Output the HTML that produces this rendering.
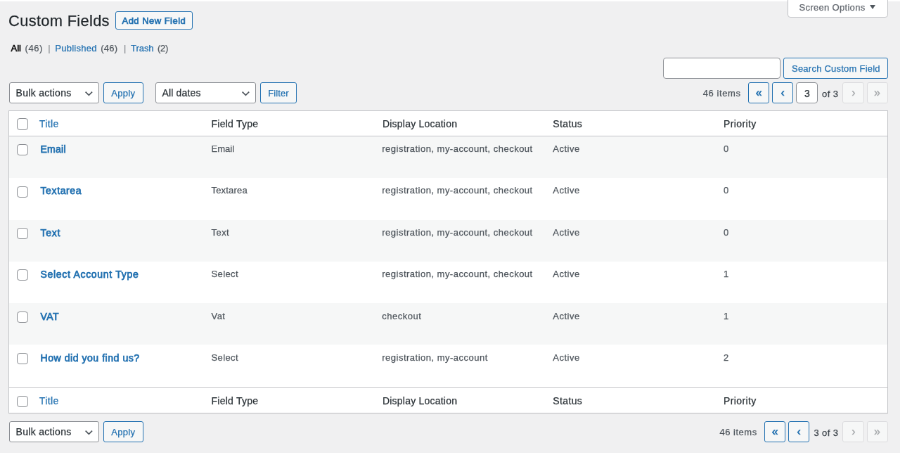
<!DOCTYPE html>
<html lang="en">
<head>
<meta charset="utf-8">
<title>Custom Fields</title>
<style>
*{box-sizing:border-box;margin:0;padding:0}
html,body{width:900px;height:453px;overflow:hidden;background:#f0f0f1}
#wrap{position:absolute;left:0;top:0;width:1280px;height:645px;transform:scale(0.703125);transform-origin:0 0;font-family:"Liberation Sans", Arial, sans-serif;font-size:13px;color:#3c434a;overflow:hidden;will-change:transform}
#wrap>*{position:absolute}
.t{white-space:nowrap;font-weight:400;text-decoration:none;display:block;-webkit-text-stroke:0.25px currentColor}
</style>
</head>
<body>
<div id="wrap">
<div style="left:0px;top:0px;width:1280px;height:2px;background:#fff;"></div>
<div style="left:1120px;top:-5.5px;width:143px;height:30px;border:1px solid #c3c4c7;border-radius:0 0 4px 4px;background:#fff;box-shadow:0 0 0 transparent;"></div>
<div style="left:1236.8px;top:7.4px;width:0;height:0;border-left:4.7px solid transparent;border-right:4.7px solid transparent;border-top:6.4px solid #50575e"></div>
<div style="left:163.5px;top:16px;width:110.5px;height:26px;border:1px solid #2271b1;border-radius:3px;background:#f6f7f7;"></div>
<div style="left:942.8px;top:82px;width:167.2px;height:30px;border:1px solid #8c8f94;border-radius:4px;background:#fff;box-shadow:inset 0 0 0 transparent;"></div>
<div style="left:1114px;top:82px;width:149px;height:30px;border:1px solid #2271b1;border-radius:3px;background:#f6f7f7;"></div>
<div style="left:13px;top:117px;width:127.5px;height:30px;border:1px solid #8c8f94;border-radius:3px;background:#fff;"></div>
<svg style="left:118.80px;top:128.10px" width="14.70" height="9.90" viewBox="-2 -2 14.70 9.90"><path d="M0.6 0.6 L5.35 5.30 L10.10 0.6" fill="none" stroke="#50575e" stroke-width="1.7" stroke-linecap="butt" stroke-linejoin="miter"/></svg>
<div style="left:147px;top:117px;width:57px;height:30px;border:1px solid #2271b1;border-radius:3px;background:#f6f7f7;"></div>
<div style="left:221px;top:117px;width:142.5px;height:30px;border:1px solid #8c8f94;border-radius:3px;background:#fff;"></div>
<svg style="left:342.40px;top:128.10px" width="14.80" height="9.90" viewBox="-2 -2 14.80 9.90"><path d="M0.6 0.6 L5.40 5.30 L10.20 0.6" fill="none" stroke="#50575e" stroke-width="1.7" stroke-linecap="butt" stroke-linejoin="miter"/></svg>
<div style="left:370px;top:117px;width:52px;height:30px;border:1px solid #2271b1;border-radius:3px;background:#f6f7f7;"></div>
<div style="left:1232.6px;top:117px;width:30.4px;height:30px;border:1px solid #dcdcde;border-radius:3px;background:#f6f7f7;"></div>
<div style="left:1198px;top:117px;width:30.5px;height:30px;border:1px solid #dcdcde;border-radius:3px;background:#f6f7f7;"></div>
<div style="left:1064px;top:117px;width:30px;height:30px;border:1px solid #2271b1;border-radius:3px;background:#f6f7f7;"></div>
<div style="left:1098.2px;top:117px;width:30.3px;height:30px;border:1px solid #2271b1;border-radius:3px;background:#f6f7f7;"></div>
<div style="left:1131.6px;top:117px;width:31px;height:30px;border:1px solid #8c8f94;border-radius:4px;background:#fff;box-shadow:inset 0 0 0 transparent;"></div>
<div style="left:13px;top:599px;width:127.5px;height:30px;border:1px solid #8c8f94;border-radius:3px;background:#fff;"></div>
<svg style="left:118.80px;top:610.10px" width="14.70" height="9.90" viewBox="-2 -2 14.70 9.90"><path d="M0.6 0.6 L5.35 5.30 L10.10 0.6" fill="none" stroke="#50575e" stroke-width="1.7" stroke-linecap="butt" stroke-linejoin="miter"/></svg>
<div style="left:147px;top:599px;width:57px;height:30px;border:1px solid #2271b1;border-radius:3px;background:#f6f7f7;"></div>
<div style="left:1232.6px;top:599px;width:30.4px;height:30px;border:1px solid #dcdcde;border-radius:3px;background:#f6f7f7;"></div>
<div style="left:1198px;top:599px;width:30.5px;height:30px;border:1px solid #dcdcde;border-radius:3px;background:#f6f7f7;"></div>
<div style="left:1087px;top:599px;width:30px;height:30px;border:1px solid #2271b1;border-radius:3px;background:#f6f7f7;"></div>
<div style="left:1121px;top:599px;width:30.4px;height:30px;border:1px solid #2271b1;border-radius:3px;background:#f6f7f7;"></div>
<div style="left:12.2px;top:157px;width:1250.8px;height:430.5px;border:1px solid #c3c4c7;background:#fff;box-shadow:0 1px 1px rgba(0,0,0,.04);"></div>
<div style="left:13.2px;top:192.8px;width:1248.8px;height:1px;background:#c3c4c7;"></div>
<div style="left:13.2px;top:551px;width:1248.8px;height:1px;background:#c3c4c7;"></div>
<div style="left:24.2px;top:168.1px;width:15.8px;height:16.5px;border:1px solid #8c8f94;border-radius:4px;background:#fff;"></div>
<div style="left:24.2px;top:562.6px;width:15.8px;height:16.5px;border:1px solid #8c8f94;border-radius:4px;background:#fff;"></div>
<div style="left:13.2px;top:193.8px;width:1248.8px;height:59.45px;background:#f6f7f7;"></div>
<div style="left:24.2px;top:205.1px;width:15.8px;height:16.2px;border:1px solid #8c8f94;border-radius:4px;background:#fff;"></div>
<div style="left:24.2px;top:264.5px;width:15.8px;height:16.2px;border:1px solid #8c8f94;border-radius:4px;background:#fff;"></div>
<div style="left:13.2px;top:312.5px;width:1248.8px;height:59.25px;background:#f6f7f7;"></div>
<div style="left:24.2px;top:323.9px;width:15.8px;height:16.2px;border:1px solid #8c8f94;border-radius:4px;background:#fff;"></div>
<div style="left:24.2px;top:383.3px;width:15.8px;height:16.2px;border:1px solid #8c8f94;border-radius:4px;background:#fff;"></div>
<div style="left:13.2px;top:431px;width:1248.8px;height:59.25px;background:#f6f7f7;"></div>
<div style="left:24.2px;top:442.7px;width:15.8px;height:16.2px;border:1px solid #8c8f94;border-radius:4px;background:#fff;"></div>
<div style="left:24.2px;top:502.1px;width:15.8px;height:16.2px;border:1px solid #8c8f94;border-radius:4px;background:#fff;"></div>
<span class="t" style="left:1136.60px;top:2.60px;font-size:13px;line-height:15px;color:#646970;letter-spacing:0.307px;">Screen Options</span>
<h1 class="t" style="left:12.10px;top:16.60px;font-size:21.8px;line-height:25px;color:#1d2327;letter-spacing:0.342px;">Custom Fields</h1>
<span class="t" style="left:173.50px;top:22.10px;font-size:13px;line-height:15px;color:#2271b1;letter-spacing:0.479px;-webkit-text-stroke:0.7px currentColor;">Add New Field</span>
<span class="t" style="left:15.50px;top:61.00px;font-size:13px;line-height:15px;color:#000;letter-spacing:-0.027px;-webkit-text-stroke:0.55px #000;">All</span>
<span class="t" style="left:35.60px;top:61.00px;font-size:13px;line-height:15px;color:#50575e;letter-spacing:0.525px;">(46)</span>
<span class="t" style="left:68.20px;top:61.00px;font-size:13px;line-height:15px;color:#787c82;-webkit-text-stroke:0;">|</span>
<a class="t" style="left:78.20px;top:61.00px;font-size:13px;line-height:15px;color:#2271b1;letter-spacing:0.274px;">Published</a>
<span class="t" style="left:143.20px;top:61.00px;font-size:13px;line-height:15px;color:#50575e;letter-spacing:0.258px;">(46)</span>
<span class="t" style="left:175.90px;top:61.00px;font-size:13px;line-height:15px;color:#787c82;-webkit-text-stroke:0;">|</span>
<a class="t" style="left:186.00px;top:61.00px;font-size:13px;line-height:15px;color:#2271b1;letter-spacing:-0.038px;">Trash</a>
<span class="t" style="left:224.00px;top:61.00px;font-size:13px;line-height:15px;color:#50575e;letter-spacing:-0.245px;">(2)</span>
<span class="t" style="left:1126.00px;top:90.00px;font-size:13px;line-height:15px;color:#2271b1;letter-spacing:0.234px;">Search Custom Field</span>
<span class="t" style="left:22.50px;top:124.20px;font-size:14px;line-height:16px;color:#2c3338;letter-spacing:0.301px;">Bulk actions</span>
<span class="t" style="left:158.30px;top:125.20px;font-size:13px;line-height:15px;color:#2271b1;letter-spacing:0.292px;">Apply</span>
<span class="t" style="left:230.40px;top:124.20px;font-size:14px;line-height:16px;color:#2c3338;letter-spacing:0.187px;">All dates</span>
<span class="t" style="left:381.20px;top:125.20px;font-size:13px;line-height:15px;color:#2271b1;letter-spacing:0.102px;">Filter</span>
<span class="t" style="left:1243.00px;top:123.00px;font-size:16px;line-height:17px;color:#a7aaad;-webkit-text-stroke:0.35px currentColor;">»</span>
<span class="t" style="left:1211.20px;top:123.00px;font-size:16px;line-height:17px;color:#a7aaad;-webkit-text-stroke:0.35px currentColor;">›</span>
<span class="t" style="left:999.80px;top:125.20px;font-size:13px;line-height:15px;color:#50575e;letter-spacing:0.580px;">46 items</span>
<span class="t" style="left:1074.80px;top:123.00px;font-size:16px;line-height:17px;color:#2271b1;-webkit-text-stroke:0.55px currentColor;">«</span>
<span class="t" style="left:1110.50px;top:123.00px;font-size:16px;line-height:17px;color:#2271b1;-webkit-text-stroke:0.55px currentColor;">‹</span>
<span class="t" style="left:1144.00px;top:124.50px;font-size:14px;line-height:16px;color:#2c3338;">3</span>
<span class="t" style="left:1169.00px;top:125.50px;font-size:13px;line-height:15px;color:#3c434a;letter-spacing:0.471px;">of 3</span>
<span class="t" style="left:22.50px;top:606.20px;font-size:14px;line-height:16px;color:#2c3338;letter-spacing:0.301px;">Bulk actions</span>
<span class="t" style="left:158.30px;top:607.20px;font-size:13px;line-height:15px;color:#2271b1;letter-spacing:0.292px;">Apply</span>
<span class="t" style="left:1243.00px;top:605.00px;font-size:16px;line-height:17px;color:#a7aaad;-webkit-text-stroke:0.35px currentColor;">»</span>
<span class="t" style="left:1211.20px;top:605.00px;font-size:16px;line-height:17px;color:#a7aaad;-webkit-text-stroke:0.35px currentColor;">›</span>
<span class="t" style="left:1023.40px;top:607.20px;font-size:13px;line-height:15px;color:#50575e;letter-spacing:0.523px;">46 items</span>
<span class="t" style="left:1097.80px;top:605.00px;font-size:16px;line-height:17px;color:#2271b1;-webkit-text-stroke:0.55px currentColor;">«</span>
<span class="t" style="left:1133.50px;top:605.00px;font-size:16px;line-height:17px;color:#2271b1;-webkit-text-stroke:0.55px currentColor;">‹</span>
<span class="t" style="left:1157.40px;top:607.50px;font-size:13px;line-height:15px;color:#3c434a;letter-spacing:0.434px;">3 of 3</span>
<a class="t" style="left:55.70px;top:167.60px;font-size:14px;line-height:16px;color:#2271b1;letter-spacing:0.416px;">Title</a>
<span class="t" style="left:300.50px;top:167.60px;font-size:14px;line-height:16px;color:#2c3338;letter-spacing:0.240px;">Field Type</span>
<span class="t" style="left:543.90px;top:167.60px;font-size:14px;line-height:16px;color:#2c3338;letter-spacing:0.224px;">Display Location</span>
<span class="t" style="left:786.20px;top:167.60px;font-size:14px;line-height:16px;color:#2c3338;letter-spacing:0.399px;">Status</span>
<span class="t" style="left:1029.00px;top:167.60px;font-size:14px;line-height:16px;color:#2c3338;letter-spacing:0.377px;">Priority</span>
<a class="t" style="left:55.70px;top:561.60px;font-size:14px;line-height:16px;color:#2271b1;letter-spacing:0.416px;">Title</a>
<span class="t" style="left:300.50px;top:561.60px;font-size:14px;line-height:16px;color:#2c3338;letter-spacing:0.240px;">Field Type</span>
<span class="t" style="left:543.90px;top:561.60px;font-size:14px;line-height:16px;color:#2c3338;letter-spacing:0.224px;">Display Location</span>
<span class="t" style="left:786.20px;top:561.60px;font-size:14px;line-height:16px;color:#2c3338;letter-spacing:0.399px;">Status</span>
<span class="t" style="left:1029.00px;top:561.60px;font-size:14px;line-height:16px;color:#2c3338;letter-spacing:0.377px;">Priority</span>
<a class="t" style="left:57.50px;top:204.00px;font-size:14px;line-height:16px;color:#2271b1;letter-spacing:0.271px;-webkit-text-stroke:0.75px currentColor;">Email</a>
<span class="t" style="left:300.50px;top:203.90px;font-size:13px;line-height:15px;color:#50575e;letter-spacing:0.021px;">Email</span>
<span class="t" style="left:543.30px;top:203.90px;font-size:13px;line-height:15px;color:#50575e;letter-spacing:0.482px;">registration, my-account, checkout</span>
<span class="t" style="left:786.20px;top:203.90px;font-size:13px;line-height:15px;color:#50575e;letter-spacing:0.519px;">Active</span>
<span class="t" style="left:1029.00px;top:203.90px;font-size:13px;line-height:15px;color:#50575e;">0</span>
<a class="t" style="left:57.50px;top:263.40px;font-size:14px;line-height:16px;color:#2271b1;letter-spacing:0.614px;-webkit-text-stroke:0.75px currentColor;">Textarea</a>
<span class="t" style="left:300.50px;top:263.30px;font-size:13px;line-height:15px;color:#50575e;letter-spacing:0.189px;">Textarea</span>
<span class="t" style="left:543.30px;top:263.30px;font-size:13px;line-height:15px;color:#50575e;letter-spacing:0.482px;">registration, my-account, checkout</span>
<span class="t" style="left:786.20px;top:263.30px;font-size:13px;line-height:15px;color:#50575e;letter-spacing:0.519px;">Active</span>
<span class="t" style="left:1029.00px;top:263.30px;font-size:13px;line-height:15px;color:#50575e;">0</span>
<a class="t" style="left:57.50px;top:322.80px;font-size:14px;line-height:16px;color:#2271b1;letter-spacing:0.704px;-webkit-text-stroke:0.75px currentColor;">Text</a>
<span class="t" style="left:300.50px;top:322.70px;font-size:13px;line-height:15px;color:#50575e;letter-spacing:0.452px;">Text</span>
<span class="t" style="left:543.30px;top:322.70px;font-size:13px;line-height:15px;color:#50575e;letter-spacing:0.482px;">registration, my-account, checkout</span>
<span class="t" style="left:786.20px;top:322.70px;font-size:13px;line-height:15px;color:#50575e;letter-spacing:0.519px;">Active</span>
<span class="t" style="left:1029.00px;top:322.70px;font-size:13px;line-height:15px;color:#50575e;">0</span>
<a class="t" style="left:57.50px;top:382.20px;font-size:14px;line-height:16px;color:#2271b1;letter-spacing:0.699px;-webkit-text-stroke:0.75px currentColor;">Select Account Type</a>
<span class="t" style="left:300.50px;top:382.10px;font-size:13px;line-height:15px;color:#50575e;letter-spacing:0.372px;">Select</span>
<span class="t" style="left:543.30px;top:382.10px;font-size:13px;line-height:15px;color:#50575e;letter-spacing:0.482px;">registration, my-account, checkout</span>
<span class="t" style="left:786.20px;top:382.10px;font-size:13px;line-height:15px;color:#50575e;letter-spacing:0.519px;">Active</span>
<span class="t" style="left:1029.00px;top:382.10px;font-size:13px;line-height:15px;color:#50575e;">1</span>
<a class="t" style="left:57.50px;top:441.60px;font-size:14px;line-height:16px;color:#2271b1;letter-spacing:0.422px;-webkit-text-stroke:0.75px currentColor;">VAT</a>
<span class="t" style="left:300.50px;top:441.50px;font-size:13px;line-height:15px;color:#50575e;letter-spacing:0.469px;">Vat</span>
<span class="t" style="left:543.30px;top:441.50px;font-size:13px;line-height:15px;color:#50575e;letter-spacing:0.493px;">checkout</span>
<span class="t" style="left:786.20px;top:441.50px;font-size:13px;line-height:15px;color:#50575e;letter-spacing:0.519px;">Active</span>
<span class="t" style="left:1029.00px;top:441.50px;font-size:13px;line-height:15px;color:#50575e;">1</span>
<a class="t" style="left:57.50px;top:501.00px;font-size:14px;line-height:16px;color:#2271b1;letter-spacing:0.560px;-webkit-text-stroke:0.75px currentColor;">How did you find us?</a>
<span class="t" style="left:300.50px;top:500.90px;font-size:13px;line-height:15px;color:#50575e;letter-spacing:0.372px;">Select</span>
<span class="t" style="left:543.30px;top:500.90px;font-size:13px;line-height:15px;color:#50575e;letter-spacing:0.490px;">registration, my-account</span>
<span class="t" style="left:786.20px;top:500.90px;font-size:13px;line-height:15px;color:#50575e;letter-spacing:0.519px;">Active</span>
<span class="t" style="left:1029.00px;top:500.90px;font-size:13px;line-height:15px;color:#50575e;">2</span>
</div>
</body>
</html>
